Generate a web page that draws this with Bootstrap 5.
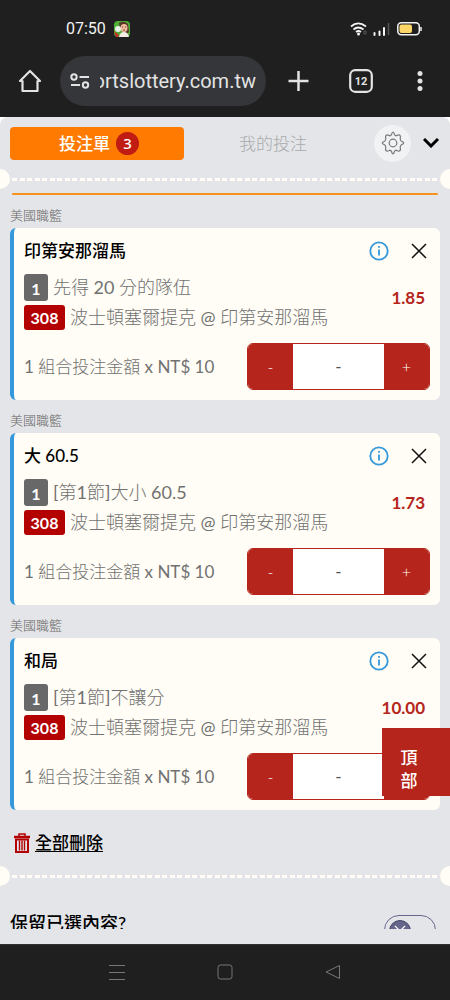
<!DOCTYPE html>
<html lang="zh-Hant">
<head>
<meta charset="utf-8">
<meta name="viewport" content="width=device-width, initial-scale=1">
<title>投注單</title>
<link href="https://cdn.jsdelivr.net/npm/bootstrap@5.3.0/dist/css/bootstrap.min.css" rel="stylesheet">
<style>
  :root { --cream: #fffdf5; --red: #b5251c; --bar: #1f1f1f; --panel: #e4e5e8; --grey: #717171; }
  body { font-family: Lato, "Noto Sans CJK TC", sans-serif; background: var(--bar); color: #000; }
  button { background: none; border: 0; padding: 0; }
  svg { display: block; flex: none; }

  .chrome-bar { background: var(--bar); color: #e3e3e3; font-family: Roboto, sans-serif; }
  .status-row { height: 56px; padding: 2px 28px 0 66px; font-size: 16px; color: #f2f2f2; }
  .tool-row { height: 61px; padding: 0 23px 11px 18px; }
  .tool-actions { gap: 40px; margin-left: 22px; }
  .address { height: 50px; min-width: 0; margin-left: 18px; border-radius: 25px; background: #35363a; color: #e3e3e3; padding: 0 10px; gap: 10px; font-size: 20px; }
  .address-text { flex: 1 1 0; min-width: 0; overflow: hidden; white-space: nowrap; display: flex; justify-content: flex-end; line-height: 28px; }

  .slip { background: var(--panel); border-radius: 8px 8px 0 0; padding-bottom: 15px; }
  .slip-wrap { background: #fff; }
  .slip-tabs { height: 52px; padding: 0 11px 0 10px; }
  .slip-tab { height: 33px; font-size: 17px; line-height: 33px; font-weight: 300; color: #a9aaac; border-radius: 4px; flex: 1 1 0; }
  .slip-tab.on { background: #ff7a00; color: #fff; font-weight: 500; gap: 6px; padding-left: 4px; }
  .count { width: 23px; height: 23px; line-height: 23px; border-radius: 50%; background: #c01c14; font-size: 15px; font-weight: 500; font-family: "Noto Sans", sans-serif; }
  .gear { width: 37px; height: 37px; border-radius: 50%; background: #f1f2f4; }

  .perforation { position: relative; height: 20px; overflow: hidden; display: flex; align-items: center; }
  .perforation::before, .perforation::after { content: ""; width: 10px; height: 20px; background: var(--cream); }
  .perforation::before { border-radius: 0 10px 10px 0; }
  .perforation::after { border-radius: 10px 0 0 10px; }
  .perforation span { flex: 1; height: 3px; background: repeating-linear-gradient(90deg, transparent 0 2px, var(--cream) 2px 7px, transparent 7px 10px, var(--cream) 10px 15px); }

  .slip-line { height: 2px; margin: 4px 12px 0; background: #f8921e; border-radius: 1px; }
  .bets { padding: 0 10px; }
  .league { height: 33px; line-height: 20px; padding-top: 10px; font-size: 13px; color: #666; margin: 0; }
  .bet { background: var(--cream); border-radius: 6px; border-left: 4px solid #3498db; padding: 11px 10px 10px; }
  .bet-head { height: 24px; padding-right: 3px; margin-bottom: 9px; gap: 22px; }
  .bet-title { font-size: 17px; font-weight: 500; line-height: 24px; margin: 0; }
  .league, .bet-info, .stake { font-family: Lato, "Noto Sans CJK TC Light", "Noto Sans CJK TC", sans-serif; }
  .bet-info { margin-bottom: 11px; color: var(--grey); font-size: 18px; }
  .bet-row { height: 30px; line-height: 30px; white-space: nowrap; gap: 5px; }
  .tag { border-radius: 3px; color: #fff; font-weight: 700; font-size: 16px; text-align: center; }
  .tag-pick { background: #686868; width: 24px; height: 27px; line-height: 29px; }
  .tag-match { background: #b30000; width: 41px; height: 25px; line-height: 26px; }
  .odds { color: var(--red); font-size: 17px; font-weight: 700; line-height: 22px; padding: 15px 5px 0 0; }
  .stake { color: var(--grey); font-size: 17px; white-space: nowrap; }
  .stepper { width: 183px; height: 47px; border: 1px solid var(--red); border-radius: 6px; overflow: hidden; }
  .stepper button { width: 45px; background: var(--red); color: #fff; font-size: 16px; font-weight: 300; }
  .stepper input { flex: 1; min-width: 0; border: 0; border-radius: 0; text-align: center; background: #fff; font-size: 17px; padding: 0; }
  .stepper input::placeholder { color: #555; opacity: 1; }

  .clear-row { height: 56px; padding: 10px 14px 0; gap: 5px; }
  .clear-link { color: #000; font-size: 17px; line-height: 24px; font-weight: 500; text-underline-offset: 2px; }
  .keep-clip { height: 43px; padding: 25px 14px 0 10px; overflow: hidden; }
  .keep-label { font-size: 18px; line-height: 24px; font-weight: 500; }
  .keep-switch { position: relative; width: 52px; height: 30px; margin-top: 4px; }
  .keep-switch input { appearance: none; display: block; width: 52px; height: 30px; margin: 0; border: 1px solid #66668c; border-radius: 15px; }
  .keep-switch svg { position: absolute; left: 5px; top: 5px; pointer-events: none; }

  .to-top { position: fixed; right: 0; top: 728px; width: 68px; height: 68px; padding: 14px 14px 0 0; background: var(--red); color: #fff; font-size: 17px; line-height: 23px; font-weight: 500; }
  .system-nav { height: 55px; border-top: 1px solid #30312f; gap: 92px; }
</style>
</head>
<body>
<header class="chrome-bar">
  <div class="status-row d-flex align-items-center">
    <span>07:50</span>
    <svg class="ms-2" width="16" height="16" viewBox="0 0 16 16"><rect width="16" height="16" rx="4" fill="#4fae35"/><path d="M5 2Q10-1 14 3L15 11 12 14 6 8Z" fill="#57372b"/><ellipse cx="10" cy="7" rx="3.5" ry="4" fill="#f0bd9d"/><path d="M5 16Q6 11 10 11T15 16Z" fill="#f4ece5"/><circle cx="4" cy="8" r="3" fill="#e8f2e9"/><path d="M0 10 5 14 4 16H2Z" fill="#c72b28"/><path d="M8 6h1M11 6h1M9 9h2" stroke="#703d32"/></svg>
    <svg class="ms-auto" width="72" height="16" viewBox="0 0 72 16" fill="none">
      <g stroke="#f4f4f4" stroke-width="1.8"><path d="M1 5.5Q8-.8 16 5.500"/><path d="M3.500 8.500Q8 4.500 13.500 8.500"/><path d="M6 11Q8.500 9 11 11"/></g><circle cx="8.500" cy="13" r="1.500" fill="#f4f4f4"/><path d="M14 10v3h2v-3z" stroke="#555" stroke-width="1"/>
      <path d="M24.500 14V12M29.500 14V10.500M34 14V7" stroke="#f4f4f4" stroke-width="2" stroke-linecap="round"/><path d="M38.500 14V2" stroke="#555" stroke-width="1.500"/>
      <rect x="47.800" y="1.800" width="21.500" height="12" rx="3.500" stroke="#f4f4f4" stroke-width="1.500"/><rect x="49.500" y="3.500" width="12.500" height="8.500" rx="2" fill="#ffd668"/><path d="M71 6v4" stroke="#f4f4f4" stroke-width="1.500"/>
    </svg>
  </div>
  <div class="tool-row d-flex align-items-center">
    <button aria-label="首頁"><svg width="24" height="24" viewBox="0 0 24 24" fill="none" stroke="#e3e3e3" stroke-width="2.200" stroke-linejoin="round" stroke-linecap="round"><path d="M2 12 12 2 22 12H19.500V22H4.500V12Z"/></svg></button>
    <button class="address d-flex align-items-center flex-grow-1">
      <svg width="20" height="16" viewBox="0 0 20 16" fill="none" stroke="#e3e3e3" stroke-width="2"><circle cx="4" cy="4" r="2.700"/><path d="M9.500 4H19M1 12H10"/><circle cx="15.500" cy="12" r="2.700"/></svg>
      <span class="address-text"><span>ortslottery.com.tw</span></span>
    </button>
    <div class="tool-actions d-flex align-items-center">
      <button aria-label="新分頁"><svg width="21" height="22" viewBox="0 0 21 22" stroke="#e3e3e3" stroke-width="2.500"><path d="M.5 11H20.500M10.500 1V21"/></svg></button>
      <button aria-label="分頁"><svg width="24" height="24" viewBox="0 0 24 24"><rect x="1.200" y="1.200" width="21.600" height="21.600" rx="5" fill="none" stroke="#e3e3e3" stroke-width="2.200"/><text x="12" y="16" text-anchor="middle" font-family="Roboto, sans-serif" font-weight="700" font-size="11" fill="#e3e3e3">12</text></svg></button>
      <button aria-label="選單"><svg width="14" height="22" viewBox="0 0 14 22" fill="#e3e3e3"><circle cx="7" cy="3.500" r="2.500"/><circle cx="7" cy="11" r="2.500"/><circle cx="7" cy="18.500" r="2.500"/></svg></button>
    </div>
  </div>
</header>

<main class="slip-wrap">
<div class="slip">
  <nav class="slip-tabs d-flex align-items-center">
    <button class="slip-tab on d-flex align-items-center justify-content-center">投注單<span class="count">3</span></button>
    <button class="slip-tab ms-1">我的投注</button>
    <button class="gear d-flex align-items-center justify-content-center ms-3" aria-label="設定"><svg width="24" height="24" viewBox="0 0 24 24" fill="none" stroke="#777" stroke-width="1.200" stroke-linejoin="round"><path d="M10.500 3.500Q12-1.500 13.500 3.500Q14 4.700 15.300 4.800Q20.500 2 19.200 8Q19.500 9.500 20.500 10.300Q25 12 20.500 13.700Q19.400 14.500 19.200 16Q20.500 22 15.300 19.200Q14 19.300 13.500 20.500Q12 25.500 10.500 20.500Q10 19.300 8.700 19.200Q3.500 22 4.800 16Q4.600 14.500 3.500 13.700Q-1 12 3.500 10.300Q4.500 9.500 4.800 8Q3.500 2 8.700 4.800Q10 4.700 10.500 3.500Z"/><circle cx="12" cy="12" r="3.800"/></svg></button>
    <button class="ms-2 ps-1" aria-label="收合"><svg width="16" height="10" viewBox="0 0 16 10" fill="none" stroke="#000" stroke-width="3"><path d="M1 1 8 8 15 1"/></svg></button>
  </nav>
  <div class="perforation"><span></span></div>
  <div class="slip-line"></div>

  <div class="bets">
    <article>
      <p class="league">美國職籃</p>
      <div class="bet">
        <div class="bet-head d-flex align-items-center">
          <h2 class="bet-title">印第安那溜馬</h2>
          <button class="ms-auto" aria-label="說明"><svg width="20" height="20" viewBox="0 0 20 20" fill="none" stroke="#3498db" stroke-width="1.800"><circle cx="10" cy="10" r="8.700"/><path d="M10 5v1.800M10 8.500V14.500"/></svg></button>
          <button aria-label="移除"><svg width="16" height="16" viewBox="0 0 16 16" stroke="#111" stroke-width="1.500"><path d="M1 1 15 15M15 1 1 15"/></svg></button>
        </div>
        <div class="bet-info d-flex">
          <div>
            <div class="bet-row d-flex align-items-center"><span class="tag tag-pick">1</span>先得 20 分的隊伍</div>
            <div class="bet-row d-flex align-items-center"><span class="tag tag-match">308</span>波士頓塞爾提克 @ 印第安那溜馬</div>
          </div>
          <div class="odds ms-auto">1.85</div>
        </div>
        <div class="d-flex align-items-center justify-content-between">
          <label class="stake" for="stake1">1 組合投注金額 x NT$ 10</label>
          <div class="stepper d-flex"><button aria-label="減少">-</button><input id="stake1" type="text" placeholder="-"><button aria-label="增加">+</button></div>
        </div>
      </div>
    </article>
    <article>
      <p class="league">美國職籃</p>
      <div class="bet">
        <div class="bet-head d-flex align-items-center">
          <h2 class="bet-title">大 60.5</h2>
          <button class="ms-auto" aria-label="說明"><svg width="20" height="20" viewBox="0 0 20 20" fill="none" stroke="#3498db" stroke-width="1.800"><circle cx="10" cy="10" r="8.700"/><path d="M10 5v1.800M10 8.500V14.500"/></svg></button>
          <button aria-label="移除"><svg width="16" height="16" viewBox="0 0 16 16" stroke="#111" stroke-width="1.500"><path d="M1 1 15 15M15 1 1 15"/></svg></button>
        </div>
        <div class="bet-info d-flex">
          <div>
            <div class="bet-row d-flex align-items-center"><span class="tag tag-pick">1</span>[第1節]大小 60.5</div>
            <div class="bet-row d-flex align-items-center"><span class="tag tag-match">308</span>波士頓塞爾提克 @ 印第安那溜馬</div>
          </div>
          <div class="odds ms-auto">1.73</div>
        </div>
        <div class="d-flex align-items-center justify-content-between">
          <label class="stake" for="stake2">1 組合投注金額 x NT$ 10</label>
          <div class="stepper d-flex"><button aria-label="減少">-</button><input id="stake2" type="text" placeholder="-"><button aria-label="增加">+</button></div>
        </div>
      </div>
    </article>
    <article>
      <p class="league">美國職籃</p>
      <div class="bet">
        <div class="bet-head d-flex align-items-center">
          <h2 class="bet-title">和局</h2>
          <button class="ms-auto" aria-label="說明"><svg width="20" height="20" viewBox="0 0 20 20" fill="none" stroke="#3498db" stroke-width="1.800"><circle cx="10" cy="10" r="8.700"/><path d="M10 5v1.800M10 8.500V14.500"/></svg></button>
          <button aria-label="移除"><svg width="16" height="16" viewBox="0 0 16 16" stroke="#111" stroke-width="1.500"><path d="M1 1 15 15M15 1 1 15"/></svg></button>
        </div>
        <div class="bet-info d-flex">
          <div>
            <div class="bet-row d-flex align-items-center"><span class="tag tag-pick">1</span>[第1節]不讓分</div>
            <div class="bet-row d-flex align-items-center"><span class="tag tag-match">308</span>波士頓塞爾提克 @ 印第安那溜馬</div>
          </div>
          <div class="odds ms-auto">10.00</div>
        </div>
        <div class="d-flex align-items-center justify-content-between">
          <label class="stake" for="stake3">1 組合投注金額 x NT$ 10</label>
          <div class="stepper d-flex"><button aria-label="減少">-</button><input id="stake3" type="text" placeholder="-"><button aria-label="增加">+</button></div>
        </div>
      </div>
    </article>
  </div>

  <div class="clear-row d-flex align-items-center">
    <svg width="16" height="20" viewBox="0 0 16 20" fill="none" stroke="#b30000"><path d="M0 4H16" stroke-width="2.500"/><path d="M5 3V1H11V3" stroke-width="1.500"/><path d="M2 6.500V19H14V6.500Z" stroke-width="2"/><path d="M5.500 7.500V17.500M8 7.500V17.500M10.500 7.500V17.500" stroke-width="1.400"/></svg>
    <a class="clear-link" href="#">全部刪除</a>
  </div>
  <div class="perforation"><span></span></div>
  <div class="keep-clip d-flex justify-content-between align-items-start">
    <label class="keep-label" for="keep">保留已選內容?</label>
    <div class="keep-switch"><input id="keep" type="checkbox" role="switch"><svg width="22" height="22" viewBox="0 0 22 22"><circle cx="11" cy="11" r="10.500" fill="#66668c" stroke="#454568"/><path d="M6 6 16 16M16 6 6 16" stroke="#fff" stroke-width="1.200"/></svg></div>
  </div>
</div>
</main>
<button class="to-top">頂<br>部</button>

<footer class="system-nav chrome-bar d-flex align-items-center justify-content-center">
  <button aria-label="最近使用"><svg width="16" height="16" viewBox="0 0 16 16" stroke="#777" stroke-width="1"><path d="M0 1.500H16M0 8.500H16M0 15.500H16"/></svg></button>
  <button aria-label="主畫面"><svg width="16" height="16" viewBox="0 0 16 16" fill="none" stroke="#777"><rect x="1" y="1" width="14" height="14" rx="2.500"/></svg></button>
  <button aria-label="返回"><svg width="16" height="16" viewBox="0 0 16 16" fill="none" stroke="#777" stroke-linejoin="round"><path d="M14.500 1.500V14.500L1 8Z"/></svg></button>
</footer>
<script src="https://cdn.jsdelivr.net/npm/bootstrap@5.3.0/dist/js/bootstrap.bundle.min.js"></script>
</body>
</html>
